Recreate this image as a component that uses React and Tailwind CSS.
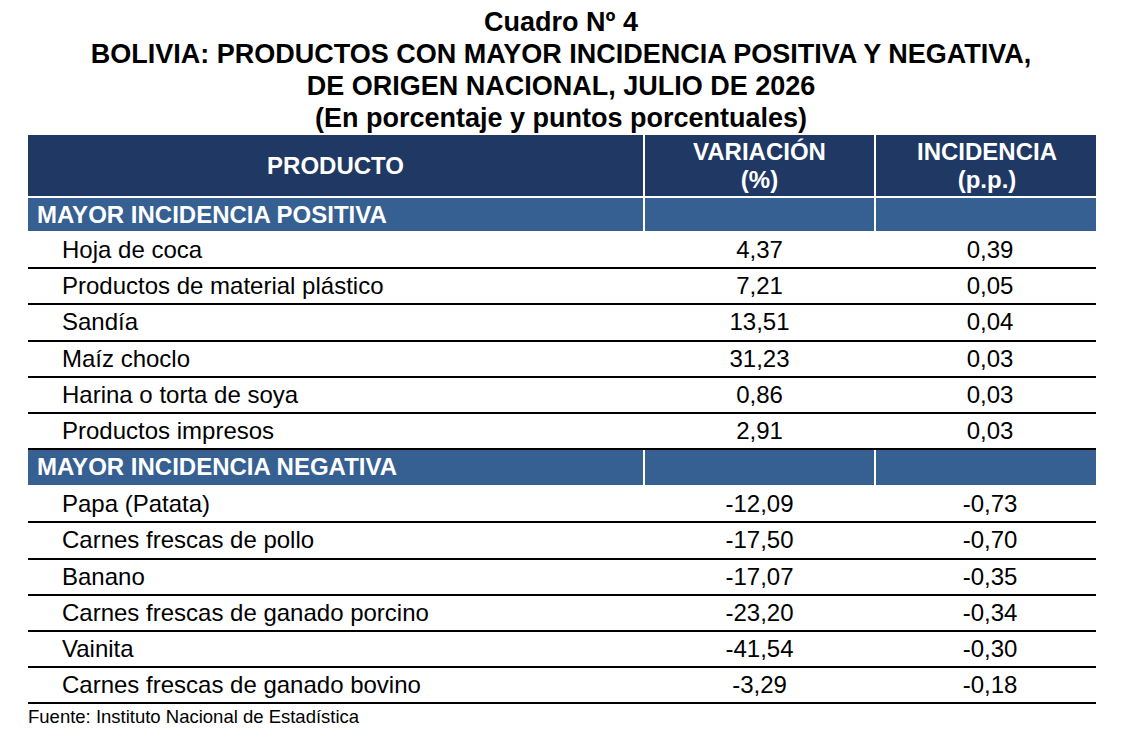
import React from "react";

const positivos = [
  ["Hoja de coca", "4,37", "0,39"],
  ["Productos de material plástico", "7,21", "0,05"],
  ["Sandía", "13,51", "0,04"],
  ["Maíz choclo", "31,23", "0,03"],
  ["Harina o torta de soya", "0,86", "0,03"],
  ["Productos impresos", "2,91", "0,03"],
];

const negativos = [
  ["Papa (Patata)", "-12,09", "-0,73"],
  ["Carnes frescas de pollo", "-17,50", "-0,70"],
  ["Banano", "-17,07", "-0,35"],
  ["Carnes frescas de ganado porcino", "-23,20", "-0,34"],
  ["Vainita", "-41,54", "-0,30"],
  ["Carnes frescas de ganado bovino", "-3,29", "-0,18"],
];

function Row({ r }) {
  return (
    <div className="grid grid-cols-[615px_231px_222px] h-[36.2px] border-b-2 border-black text-[24px] leading-[34px] text-black">
      <div className="pl-[34px] whitespace-nowrap">{r[0]}</div>
      <div className="text-center pl-[2px]">{r[1]}</div>
      <div className="text-center pl-[10px]">{r[2]}</div>
    </div>
  );
}

function Band({ label, h }) {
  return (
    <div className={`grid grid-cols-[615px_229px_220px] gap-x-[2px] ${h}`}>
      <div className="bg-[#366092] text-white font-bold text-[24px] leading-[33px] pl-[9px] whitespace-nowrap">
        {label}
      </div>
      <div className="bg-[#366092]" />
      <div className="bg-[#366092]" />
    </div>
  );
}

export default function App() {
  return (
    <div className="w-[1122px] h-[744px] bg-white overflow-hidden" style={{ fontFamily: '"Liberation Sans", Arial, sans-serif' }}>
      <div className="pt-[6px] text-center font-bold text-[27px] leading-[32px] text-black">
        <div>Cuadro Nº 4</div>
        <div>BOLIVIA: PRODUCTOS CON MAYOR INCIDENCIA POSITIVA Y NEGATIVA,</div>
        <div>DE ORIGEN NACIONAL, JULIO DE 2026</div>
        <div>(En porcentaje y puntos porcentuales)</div>
      </div>
      <div className="ml-[28px] w-[1068px] mt-[1px]">
        <div className="grid grid-cols-[615px_229px_220px] gap-x-[2px] h-[61px]">
          <div className="bg-[#1F3864] text-white font-bold text-[24px] flex items-center justify-center">
            PRODUCTO
          </div>
          <div className="bg-[#1F3864] text-white font-bold text-[24px] leading-[28px] flex flex-col items-center justify-center">
            <span>VARIACIÓN</span>
            <span>(%)</span>
          </div>
          <div className="bg-[#1F3864] text-white font-bold text-[24px] leading-[28px] flex flex-col items-center justify-center pl-[2px]">
            <span>INCIDENCIA</span>
            <span>(p.p.)</span>
          </div>
        </div>
        <div className="h-[2px]" />
        <Band label="MAYOR INCIDENCIA POSITIVA" h="h-[33px]" />
        <div className="h-[2px]" />
        {positivos.map((r) => (
          <Row key={r[0]} r={r} />
        ))}
        <Band label="MAYOR INCIDENCIA NEGATIVA" h="h-[35px]" />
        <div className="h-[2px]" />
        {negativos.map((r) => (
          <Row key={r[0]} r={r} />
        ))}
      </div>
      <div className="pl-[28px] pt-[1px] text-[18.5px] leading-[24px] text-black">
        Fuente: Instituto Nacional de Estadística
      </div>
    </div>
  );
}
